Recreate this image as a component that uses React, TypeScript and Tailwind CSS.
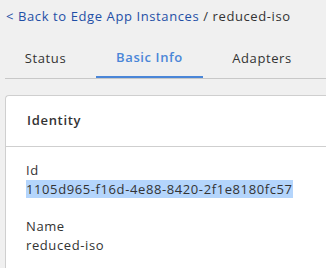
export default function App() {
  const tabs = [
    { label: 'Status', cls: 'w-[81px] mr-[10px]' },
    { label: 'Basic Info', cls: 'w-[107px]' },
    { label: 'Adapters', cls: 'w-[118px]' },
  ];
  const active = 'Basic Info';

  return (
    <div
      className="w-[326px] h-[268px] overflow-hidden bg-[#f0f0f0] text-[13px] text-[#333] tracking-[0.6px]"
      style={{ fontFamily: '"Open Sans", sans-serif' }}
    >
      <div className="pl-[6px] pt-[7px] leading-[18px] whitespace-nowrap">
        <a className="text-[#1f4fa6]">&lt; Back to Edge App Instances</a>
        <span> / reduced-iso</span>
      </div>

      <div className="ml-[5px] mt-[14px] flex border-b border-[#c8c8c8]">
        {tabs.map((t) => (
          <div
            key={t.label}
            className={
              t.label === active
                ? `${t.cls} h-[39px] flex items-center justify-center font-semibold text-[#4a86d8] border-b-2 border-[#4a86d8] -mb-px`
                : `${t.cls} h-[39px] flex items-center justify-center`
            }
          >
            {t.label}
          </div>
        ))}
      </div>

      <div className="ml-[5px] mt-[16px] bg-white border border-[#cfcfcf] border-r-0 rounded-tl-[4px] h-[200px]">
        <div className="h-[51px] pl-[21px] flex items-center font-semibold tracking-[0.7px] border-b border-[#cfcfcf]">
          Identity
        </div>
        <div className="pl-[20px] pt-[14px] leading-[19px]">
          <div>Id</div>
          <div>
            <span className="bg-[#b4d5fc]">1105d965-f16d-4e88-8420-2f1e8180fc57</span>
          </div>
          <div className="mt-[18px]">Name</div>
          <div>reduced-iso</div>
        </div>
      </div>
    </div>
  );
}
